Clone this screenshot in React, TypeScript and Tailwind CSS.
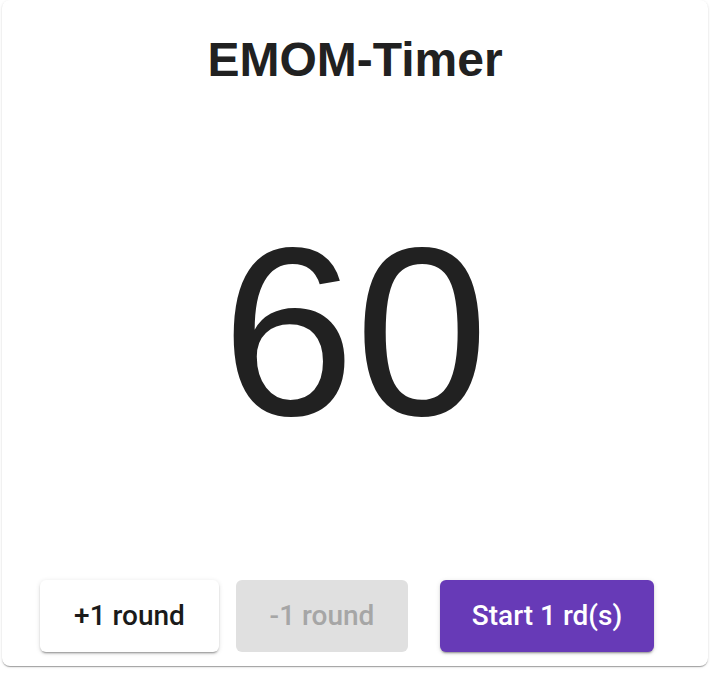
import React from 'react';

export default function App() {
    const raised = 'shadow-[0_3px_1px_-2px_rgba(0,0,0,0.2),0_2px_2px_0_rgba(0,0,0,0.14),0_1px_5px_0_rgba(0,0,0,0.12)]';

    return (
        <div className="w-[710px] h-[674px] bg-white font-['Liberation_Sans',Arial,sans-serif] text-[#212121]">
            <div className="mx-[2px] h-[666px] bg-white rounded-lg shadow-[0_2px_1px_-1px_rgba(0,0,0,0.2),0_1px_1px_0_rgba(0,0,0,0.14),0_1px_3px_0_rgba(0,0,0,0.12)] flex flex-col">
                {/* Title */}
                <h1 className="mt-[36px] text-center text-[48px] leading-[48px] font-bold">EMOM-Timer</h1>

                {/* Countdown */}
                <div className="mt-[128px] text-center text-[240px] leading-[240px]">60</div>

                {/* Actions */}
                <div className="mt-[128px] flex items-center pl-[38px] font-['Roboto',Arial,sans-serif] font-medium text-[28px]">
                    <button className={`h-[72px] w-[179px] rounded-md bg-white text-[#1a1a1a] ${raised}`}>
                        +1 round
                    </button>
                    <button disabled className="ml-[17px] h-[72px] w-[172px] rounded-md bg-[#e0e0e0] text-[#a6a6a6]">
                        -1 round
                    </button>
                    <button className={`ml-[32px] h-[72px] w-[214px] rounded-md bg-[#673ab7] text-white ${raised}`}>
                        Start 1 rd(s)
                    </button>
                </div>
            </div>
        </div>
    );
}
